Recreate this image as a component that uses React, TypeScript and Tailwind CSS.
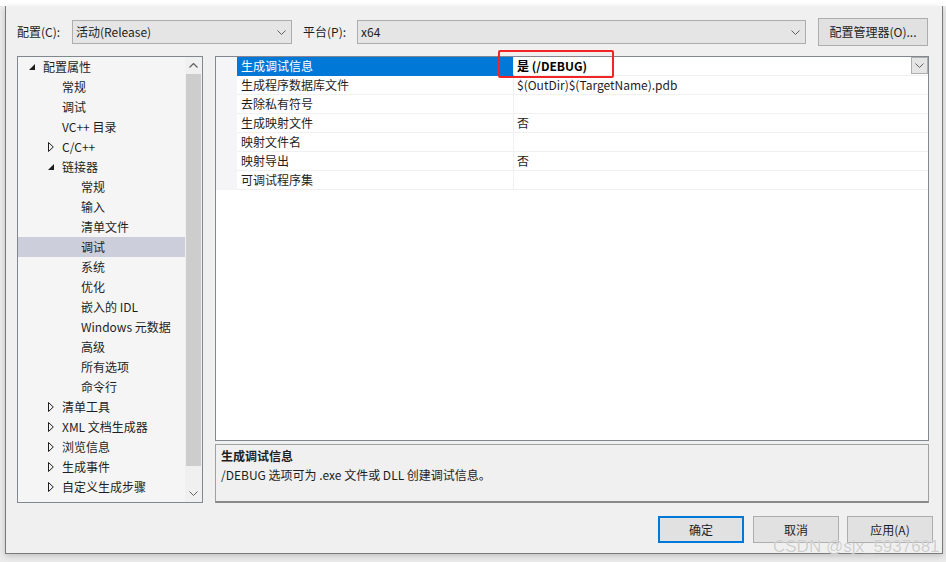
import React from "react";

type TreeItem = { l: number; t: string; e?: "open" | "closed"; sel?: boolean };

const tree: TreeItem[] = [
  { l: 0, t: "配置属性", e: "open" },
  { l: 1, t: "常规" },
  { l: 1, t: "调试" },
  { l: 1, t: "VC++ 目录" },
  { l: 1, t: "C/C++", e: "closed" },
  { l: 1, t: "链接器", e: "open" },
  { l: 2, t: "常规" },
  { l: 2, t: "输入" },
  { l: 2, t: "清单文件" },
  { l: 2, t: "调试", sel: true },
  { l: 2, t: "系统" },
  { l: 2, t: "优化" },
  { l: 2, t: "嵌入的 IDL" },
  { l: 2, t: "Windows 元数据" },
  { l: 2, t: "高级" },
  { l: 2, t: "所有选项" },
  { l: 2, t: "命令行" },
  { l: 1, t: "清单工具", e: "closed" },
  { l: 1, t: "XML 文档生成器", e: "closed" },
  { l: 1, t: "浏览信息", e: "closed" },
  { l: 1, t: "生成事件", e: "closed" },
  { l: 1, t: "自定义生成步骤", e: "closed" },
];

const indent = ["pl-[6px]", "pl-[25px]", "pl-[44px]"];

const rows: [string, string][] = [
  ["生成调试信息", "是 (/DEBUG)"],
  ["生成程序数据库文件", "$(OutDir)$(TargetName).pdb"],
  ["去除私有符号", ""],
  ["生成映射文件", "否"],
  ["映射文件名", ""],
  ["映射导出", "否"],
  ["可调试程序集", ""],
];

function ChevronDown({ className = "" }: { className?: string }) {
  return (
    <svg width="9" height="5" viewBox="0 0 9 5" className={className}>
      <path d="M0.5 0.5 L4.5 4.5 L8.5 0.5" fill="none" stroke="#606060" strokeWidth="1" />
    </svg>
  );
}

function ChevronUp() {
  return (
    <svg width="9" height="5" viewBox="0 0 9 5">
      <path d="M0.5 4.5 L4.5 0.5 L8.5 4.5" fill="none" stroke="#606060" strokeWidth="1.2" />
    </svg>
  );
}

function Expander({ e }: { e?: "open" | "closed" }) {
  if (e === "open")
    return (
      <svg width="6" height="6" viewBox="0 0 6 6">
        <polygon points="6,0 6,6 0,6" fill="#1e1e1e" />
      </svg>
    );
  if (e === "closed")
    return (
      <svg width="6" height="10" viewBox="0 0 6 10">
        <polygon points="0.5,0.5 5.3,5 0.5,9.5" fill="none" stroke="#1e1e1e" strokeWidth="1" />
      </svg>
    );
  return null;
}

function Combo({ w, text }: { w: string; text: string }) {
  return (
    <div className={`${w} h-[24px] border border-[#adadad] bg-[#e5e5e5] flex items-center pl-[3px] pr-[5px]`}>
      <span className="flex-1 text-[#1e1e1e]">{text}</span>
      <ChevronDown />
    </div>
  );
}

export default function App() {
  return (
    <div className="relative w-[946px] h-[562px] overflow-hidden bg-[#ebebeb] font-['Noto_Sans_CJK_SC','Microsoft_YaHei',sans-serif] text-[12px] leading-none text-[#1e1e1e]">
      <div className="h-[6px] bg-white" />
      <div className="ml-[5px] w-[938px] h-[548px] bg-[#f0f0f0] border-x border-b border-[#7a7a7a] shadow-[0_2px_6px_rgba(0,0,0,0.18)] flex flex-col">
        {/* Top row */}
        <div className="mt-[12px] h-[28px] pl-[11px] flex items-center">
          <span className="w-[55px]">配置(C):</span>
          <Combo w="w-[220px]" text="活动(Release)" />
          <span className="ml-[11px] w-[54px]">平台(P):</span>
          <Combo w="w-[449px]" text="x64" />
          <div className="ml-[12px] w-[110px] h-[28px] border border-[#adadad] bg-[#e1e1e1] flex items-center justify-center">
            配置管理器(O)...
          </div>
        </div>

        {/* Main area */}
        <div className="mt-[10px] pl-[11px] h-[447px] flex">
          {/* Tree */}
          <div className="w-[186px] h-full border border-[#828790] bg-[#f5f5f5] flex">
            <div className="flex-1 flex flex-col">
              {tree.map((it, i) => (
                <div
                  key={i}
                  className={`h-[20px] flex items-center ${indent[it.l]} ${it.sel ? "bg-[#cccedb]" : ""}`}
                >
                  <div className="w-[19px] h-full flex items-center pl-[5px]">
                    <Expander e={it.e} />
                  </div>
                  <span className="whitespace-nowrap">{it.t}</span>
                </div>
              ))}
            </div>
            <div className="w-[17px] h-full bg-[#f0f0f0] flex flex-col">
              <div className="h-[17px] flex items-center justify-center">
                <ChevronUp />
              </div>
              <div className="mx-[1px] h-[392px] bg-[#cdcdcd]" />
              <div className="flex-1" />
              <div className="h-[17px] flex items-center justify-center">
                <ChevronDown />
              </div>
            </div>
          </div>

          {/* Right column */}
          <div className="ml-[12px] w-[714px] h-full flex flex-col">
            <div className="h-[385px] border border-[#828790] bg-white flex flex-col">
              {rows.map(([n, v], i) => (
                <div key={i} className="h-[19px] flex">
                  <div className="w-[21px] h-full bg-[#f5f5f7]" />
                  <div
                    className={`w-[277px] h-full border-b border-r border-[#f0f0f0] flex items-center pl-[4px] ${
                      i === 0 ? "bg-[#0078d7] text-white border-b-[#0078d7]" : ""
                    }`}
                  >
                    {n}
                  </div>
                  <div className="flex-1 h-full border-b border-[#f0f0f0] flex items-center pl-[3px] relative">
                    <span className={i === 0 ? "font-bold text-black" : ""}>{v}</span>
                    {i === 0 && (
                      <div className="absolute right-0 top-0 w-[17px] h-[17px] border border-[#adadad] bg-[#e5e5e5] flex items-center justify-center">
                        <ChevronDown />
                      </div>
                    )}
                  </div>
                </div>
              ))}
            </div>
            <div className="mt-[3px] h-[59px] border border-[#a0a0a0] border-b-2 border-b-[#8a8a8a] bg-[#f0f0f0] pl-[5px] pt-[5px] flex flex-col">
              <span className="font-bold h-[13px]">生成调试信息</span>
              <span className="mt-[6px]">/DEBUG 选项可为 .exe 文件或 DLL 创建调试信息。</span>
            </div>
          </div>
        </div>

        {/* Buttons */}
        <div className="mt-[13px] h-[27px] flex pl-[652px]">
          <div className="w-[86px] h-[27px] border-2 border-[#0078d7] bg-[#e1e1e1] flex items-center justify-center">
            确定
          </div>
          <div className="ml-[9px] w-[86px] h-[27px] border border-[#adadad] bg-[#e1e1e1] flex items-center justify-center">
            取消
          </div>
          <div className="ml-[8px] w-[86px] h-[27px] border border-[#adadad] bg-[#e1e1e1] flex items-center justify-center">
            应用(A)
          </div>
        </div>
      </div>

      {/* Red highlight box */}
      <div className="absolute left-[498px] top-[50px] w-[116px] h-[28px] border-[2px] border-[#f42424] rounded-[2px]" />

      {/* Watermark */}
      <div className="absolute left-[773px] top-[538px] font-['Liberation_Sans',sans-serif] text-[17px] leading-none text-[rgba(190,190,190,0.75)] [text-shadow:0_0_1px_rgba(255,255,255,0.9)] whitespace-nowrap">
        CSDN @sjx_5937681
      </div>
    </div>
  );
}
